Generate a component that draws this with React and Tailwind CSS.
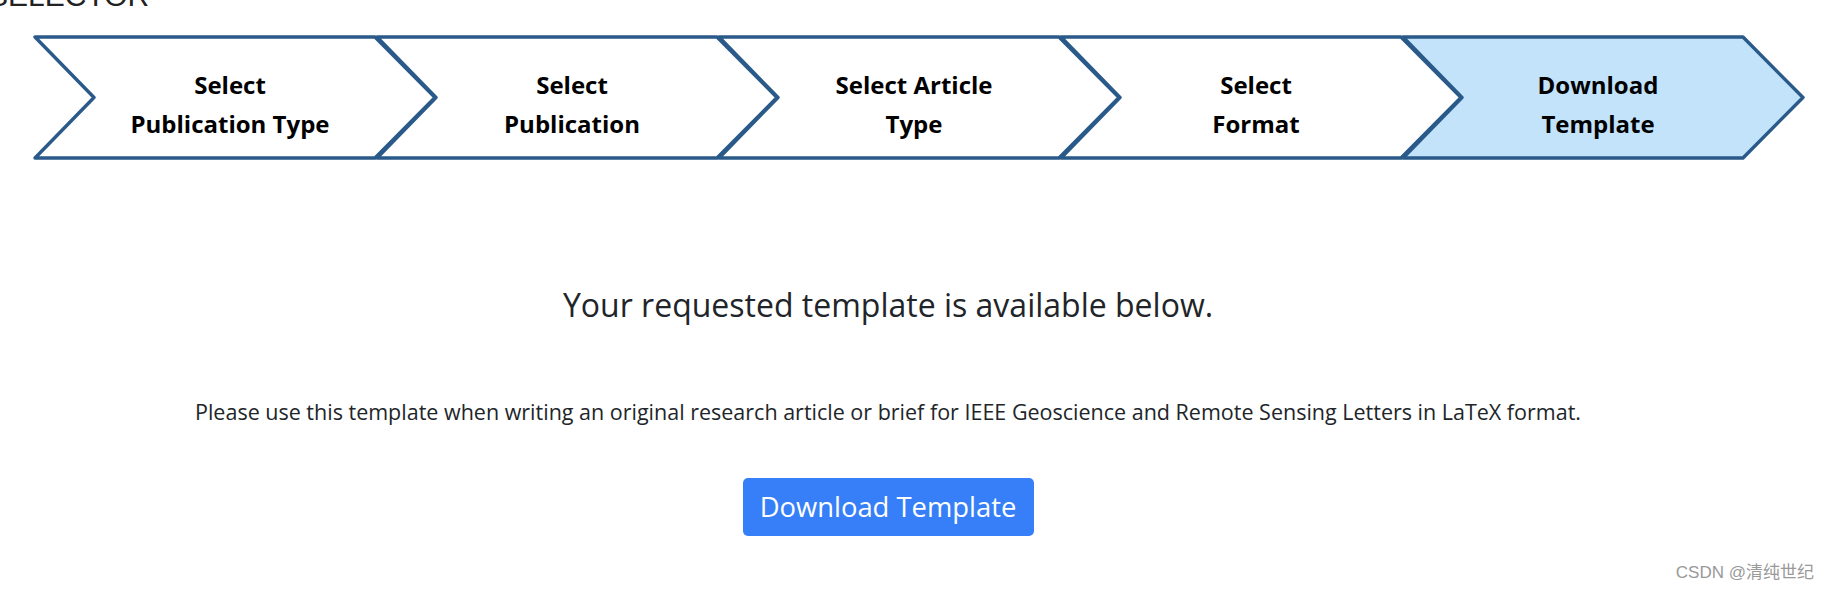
import React from "react";

const steps = [
  ["Select", "Publication Type"],
  ["Select", "Publication"],
  ["Select Article", "Type"],
  ["Select", "Format"],
  ["Download", "Template"],
];

function Chevron({ lines, active, first }) {
  return (
    <div className={`relative w-[404px] h-[125px] shrink-0 ${first ? "" : "-ml-[62px]"}`}>
      <svg className="absolute inset-0" width="404" height="125" viewBox="0 0 404 125">
        <polygon
          points="2,2 342,2 402,62.5 342,123 2,123 61,62.5"
          fill={active ? "#c2e3fa" : "#ffffff"}
          stroke="#2a5a89"
          strokeWidth="3.4"
          strokeLinejoin="round"
        />
      </svg>
      <div className="relative flex h-full flex-col items-center justify-center pr-[10px] pt-[12px] text-[24px] font-bold leading-[39px] text-black [font-family:'Open_Sans',sans-serif]">
        <span>{lines[0]}</span>
        <span>{lines[1]}</span>
      </div>
    </div>
  );
}

export default function App() {
  return (
    <div className="relative h-[592px] w-full overflow-hidden bg-white text-[#212529] [font-family:'Open_Sans',sans-serif]">
      <div className="-mt-[19px] -ml-[12px] text-[30px] leading-[30px] text-[#222] [font-family:'Liberation_Sans',sans-serif]">
        SELECTOR
      </div>
      <div className="mt-[24px] flex pl-[33px]">
        {steps.map((s, i) => (
          <Chevron key={i} lines={s} active={i === 4} first={i === 0} />
        ))}
      </div>
      <div className="flex flex-col items-center pr-[52px]">
        <h3 className="mt-[125px] text-[32px] leading-[40px] font-normal">
          Your requested template is available below.
        </h3>
        <p className="mt-[72px] text-[21.5px] leading-[30px]">
          Please use this template when writing an original research article or brief for IEEE Geoscience and Remote Sensing Letters in LaTeX format.
        </p>
        <button className="mt-[51px] h-[58px] w-[291px] rounded-[5px] bg-[#367ff8] text-[27.4px] text-white">
          Download Template
        </button>
      </div>
      <div className="absolute right-[14px] bottom-[7px] text-[17px] text-[#999] [font-family:'Liberation_Sans','Noto_Sans_CJK_SC',sans-serif]">
        CSDN @清纯世纪
      </div>
    </div>
  );
}
